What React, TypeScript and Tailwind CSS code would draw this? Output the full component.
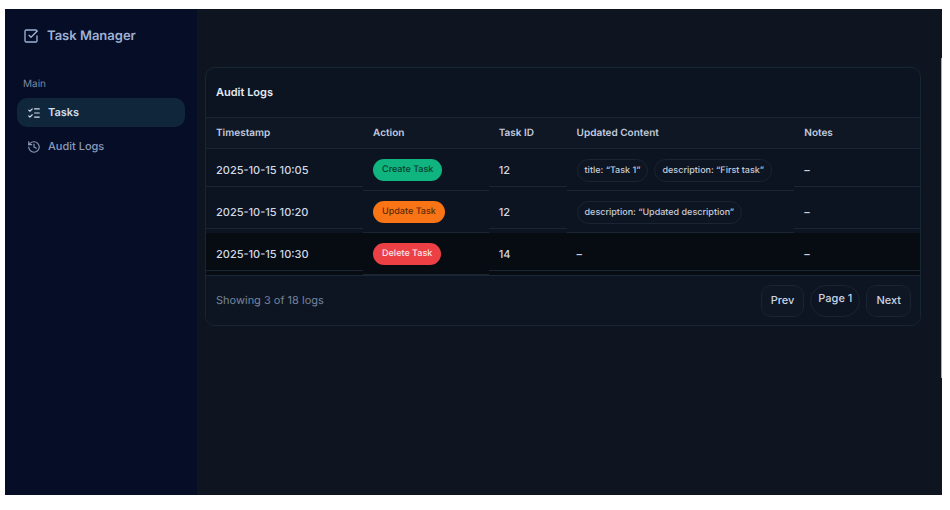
import { History, ListChecks } from "lucide-react";
import type { ReactNode } from "react";

type Log = {
  time: string;
  action: string;
  tone: string;
  taskId: number;
  content: string[];
  active?: boolean;
};

const logs: Log[] = [
  {
    time: "2025-10-15 10:05",
    action: "Create Task",
    tone: "bg-[#10b47f] text-[#07402f]",
    taskId: 12,
    content: ["title: “Task 1”", "description: “First task”"],
  },
  {
    time: "2025-10-15 10:20",
    action: "Update Task",
    tone: "bg-[#f97415] text-[#5c2c0a]",
    taskId: 12,
    content: ["description: “Updated description”"],
  },
  {
    time: "2025-10-15 10:30",
    action: "Delete Task",
    tone: "bg-[#ec4045] text-[#fbe6e8]",
    taskId: 14,
    content: [],
    active: true,
  },
];

function Cell({ tall = false, children }: { tall?: boolean; children: ReactNode }) {
  return (
    <td className="h-[42px] p-0 align-top">
      <div
        className={`flex gap-1.5 border-b border-[#1b2533] px-2.5 pt-2.5 ${tall ? "h-[42px]" : "h-[38px]"}`}
      >
        {children}
      </div>
    </td>
  );
}

function TaskLogo() {
  return (
    <svg
      aria-hidden="true"
      className="size-4"
      viewBox="0 0 24 24"
      fill="none"
      stroke="currentColor"
      strokeWidth="2"
      strokeLinecap="round"
      strokeLinejoin="round"
    >
      <path d="m9 11 3 3L21 5" />
      <path d="M21 12v7a2 2 0 0 1-2 2H5a2 2 0 0 1-2-2V5a2 2 0 0 1 2-2h14a2 2 0 0 1 2 2" />
    </svg>
  );
}

function Sidebar() {
  return (
    <aside className="w-48 shrink-0 bg-[#060d26] px-3 pt-4">
      <div className="flex items-center gap-2 px-1.5 text-[#9fb1d3]">
        <TaskLogo />
        <h1 className="text-[13px] leading-[22px] font-semibold">Task Manager</h1>
      </div>
      <p className="mt-[29px] px-1.5 text-[10px] leading-4 text-[#7c88a3]">Main</p>
      <nav className="mt-1.5 flex flex-col gap-[5px] text-[11px]">
        <a
          href="#tasks"
          className="flex h-[29px] items-center gap-[7px] rounded-[10px] bg-[#10263a] px-2.5 font-semibold text-[#d3dce9]"
        >
          <ListChecks size={14} />
          Tasks
        </a>
        <a
          href="#audit-logs"
          className="flex h-[29px] items-center gap-[7px] rounded-[10px] px-2.5 font-medium text-[#8b9bb9]"
        >
          <History size={14} />
          Audit Logs
        </a>
      </nav>
    </aside>
  );
}

export default function App() {
  return (
    <div className="h-screen bg-white pt-[9px] pr-2 pb-[15px] pl-[5px] font-['Inter',sans-serif] [text-rendering:geometricPrecision]">
      <div className="relative flex h-full bg-[#0e1521]">
        <Sidebar />
        <main className="min-w-0 flex-1 pt-[58px] pr-[21px] pl-2">
          <section className="overflow-hidden rounded-[10px] border border-[#182534] bg-[#0c1421]">
            <h2 className="flex h-[49px] items-center px-2.5 text-[11px] font-semibold text-[#e5eaf2]">
              Audit Logs
            </h2>
            <table className="w-full table-fixed border-collapse text-left">
              <colgroup>
                <col className="w-[22%]" />
                <col className="w-[17.6%]" />
                <col className="w-[10.9%]" />
                <col className="w-[31.9%]" />
                <col />
              </colgroup>
              <thead>
                <tr className="h-[31px] border-y border-[#192635] bg-[#0f1725] text-[10px] text-[#c3cbdd]">
                  <th className="px-2.5 py-0 font-semibold">Timestamp</th>
                  <th className="px-2.5 py-0 font-semibold">Action</th>
                  <th className="px-2.5 py-0 font-semibold">Task ID</th>
                  <th className="px-2.5 py-0 font-semibold">Updated Content</th>
                  <th className="px-2.5 py-0 font-semibold">Notes</th>
                </tr>
              </thead>
              <tbody className="text-[11px] leading-[22px] font-medium text-[#d3d9e4]">
                {logs.map((log) => (
                  <tr key={log.time} className={log.active ? "bg-[#070c12]" : ""}>
                    <Cell>{log.time}</Cell>
                    <Cell tall>
                      <span
                        className={`h-[22px] rounded-full px-[9px] text-[9px] whitespace-nowrap ${log.tone}`}
                      >
                        {log.action}
                      </span>
                    </Cell>
                    <Cell>{log.taskId}</Cell>
                    <Cell tall={log.content.length > 0}>
                      {log.content.length === 0
                        ? "–"
                        : log.content.map((item) => (
                            <span
                              key={item}
                              className="flex h-[23px] items-center rounded-full border border-[#1a2432] bg-[#0d1522] px-[7px] text-[9px] whitespace-nowrap text-[#c5ccda]"
                            >
                              {item}
                            </span>
                          ))}
                    </Cell>
                    <Cell>–</Cell>
                  </tr>
                ))}
              </tbody>
            </table>
            <footer className="flex h-[50px] items-center justify-between border-t border-[#1a2634] bg-[#0d1522] px-[9px] text-[11px]">
              <p className="pl-px text-[#75849d]">Showing 3 of 18 logs</p>
              <div className="flex h-8 gap-1.5 text-[#cbd4e2]">
                <button className="rounded-[10px] border border-[#1a2432] bg-[#0f1725] px-[9px] font-medium">
                  Prev
                </button>
                <span className="rounded-full border border-[#1a2432] px-[7px] pt-0.5 leading-5 font-medium">
                  Page 1
                </span>
                <button className="rounded-[10px] border border-[#1a2432] bg-[#0f1725] px-[9px] font-medium">
                  Next
                </button>
              </div>
            </footer>
          </section>
        </main>
        <div className="absolute top-[49px] right-0 h-80 w-px bg-[#a5a9b0]" />
      </div>
    </div>
  );
}
